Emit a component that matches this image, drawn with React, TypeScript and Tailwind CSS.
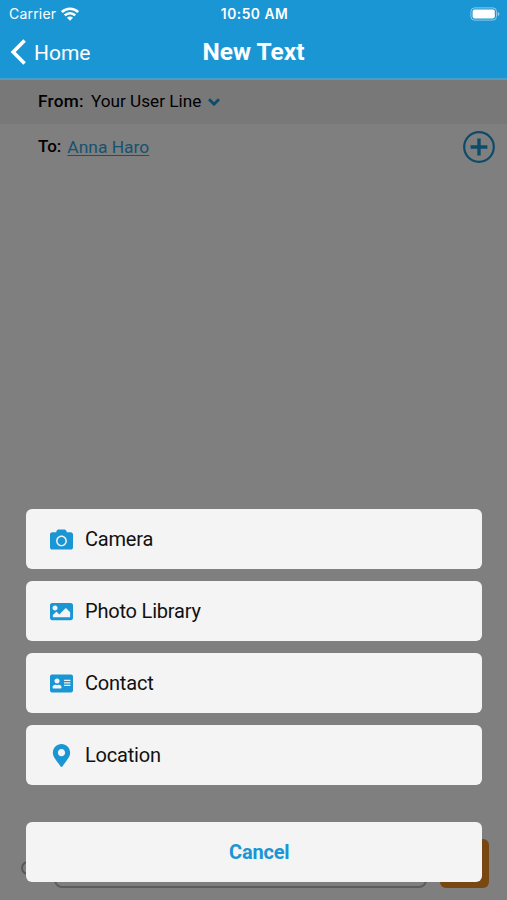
import React from 'react';
import { FaAddressCard, FaCamera, FaImage, FaMapMarkerAlt } from 'react-icons/fa';

const ACTIONS = [
  { label: 'Camera', icon: FaCamera },
  { label: 'Photo Library', icon: FaImage },
  { label: 'Contact', icon: FaAddressCard },
  { label: 'Location', icon: FaMapMarkerAlt },
];

const StatusBar: React.FC = () => (
  <div className="grid grid-cols-3 items-center h-7 pl-[9px] pr-[7px] font-['Inter',sans-serif]">
    <div className="flex items-center gap-[5px] -mt-px">
      <span className="text-[14px] leading-4 tracking-[0.2px]">Carrier</span>
      <svg className="w-[18px] h-[14px]" viewBox="0 0 18 14" fill="none" stroke="currentColor" strokeWidth="2.7">
        <path d="M0.9 5.1a11.5 11.5 0 0 1 16.2 0" />
        <path d="M3.8 8.4a7.4 7.4 0 0 1 10.4 0" />
        <path d="M9 13.8 6 10.7a4.2 4.2 0 0 1 6 0Z" fill="currentColor" stroke="none" />
      </svg>
    </div>
    <span className="text-center font-semibold text-[13.8px] leading-4 tracking-[0.5px]">10:50 AM</span>
    <svg className="justify-self-end w-[30px] h-[14px] -mt-px" viewBox="0 0 30 14" fill="none">
      <rect x="0.9" y="0.9" width="25.6" height="12.2" rx="3.6" stroke="#8fcbea" strokeWidth="1" />
      <rect x="2.6" y="2.6" width="22.2" height="8.8" rx="1.8" fill="#fff" />
      <path d="M27.8 5v4c1.1-.4 1.6-1.1 1.6-2s-.5-1.6-1.6-2Z" fill="#8fcbea" />
    </svg>
  </div>
);

const NavBar: React.FC = () => (
  <div className="grid grid-cols-3 items-center h-12 pl-[10px] pr-[10px]">
    <button className="flex items-center gap-2 text-[21px] leading-6">
      <svg className="w-4 h-[26px]" viewBox="0 0 16 26" fill="none" stroke="currentColor" strokeWidth="3.6">
        <path d="M14.6 1.6 3.2 13l11.4 11.4" />
      </svg>
      <span className="pt-px">Home</span>
    </button>
    <h1 className="text-center text-[24.5px] leading-8 font-bold whitespace-nowrap">New Text</h1>
  </div>
);

const Compose: React.FC = () => (
  <div className="flex-1 flex flex-col text-[17.2px] text-black">
    <div className="flex items-center h-11 pl-[38px] bg-[#f1f1f1]">
      <span className="font-medium tracking-[0.3px]">From:</span>
      <span className="ml-[7px]">Your User Line</span>
      <svg className="ml-[7px] w-3 h-2 text-[#1b96d4]" viewBox="0 0 12 8" fill="none" stroke="currentColor" strokeWidth="2.8">
        <path d="M1 1.3 6 6.2l5-4.9" />
      </svg>
    </div>
    <div className="flex items-center h-[45px] pl-[38px] pr-3">
      <span className="font-medium text-[17px]">To:</span>
      <a className="ml-[6px] pt-px text-[17.4px] text-[#2ea6e0] underline decoration-1 underline-offset-2">Anna Haro</a>
      <svg className="ml-auto w-8 h-8 text-[#1b96d4]" viewBox="0 0 32 32" fill="none" stroke="currentColor">
        <circle cx="16" cy="16" r="14.8" strokeWidth="2.2" />
        <path d="M16 7.6v16.8M7.6 16h16.8" strokeWidth="3.4" />
      </svg>
    </div>
    <div className="mt-auto flex items-center h-[49px] mb-3 pl-[21px] pr-[18px]">
      <div className="mt-2 w-5 h-[14px] rounded-full border-2 border-[#b0b0b0]" />
      <div className="ml-[13px] w-[373px] h-12 rounded-lg border-2 border-[#b8b8b8]" />
      <div className="ml-auto w-[49px] h-[49px] rounded-md bg-[#f28f22]" />
    </div>
  </div>
);

const ActionSheet: React.FC = () => (
  <div className="absolute inset-0 flex flex-col justify-end pl-[26px] pr-[25.5px] pb-[18px] bg-black/50">
    <div className="flex flex-col gap-3">
      {ACTIONS.map(({ label, icon: Icon }) => (
        <button
          key={label}
          className="flex items-center gap-3 h-[60px] pl-6 rounded-md bg-[#f4f4f4] text-xl tracking-[-0.2px] text-[#111111]"
        >
          <Icon className="w-[23px] h-[23px] text-[#1b96d4]" />
          <span>{label}</span>
        </button>
      ))}
    </div>
    <button className="mt-[37px] h-[60px] pl-[11px] rounded-md bg-[#f4f4f4] text-xl tracking-[-0.2px] font-bold text-[#1b96d4]">
      Cancel
    </button>
  </div>
);

const App: React.FC = () => {
  return (
    <div className="flex flex-col w-full h-screen overflow-hidden bg-white font-['Roboto',sans-serif]">
      <header className="h-20 bg-[#1b96d4] border-b-2 border-[#4a9fc8] text-white">
        <StatusBar />
        <NavBar />
      </header>
      <main className="relative flex-1 flex flex-col">
        <Compose />
        <ActionSheet />
      </main>
    </div>
  );
};

export default App;
